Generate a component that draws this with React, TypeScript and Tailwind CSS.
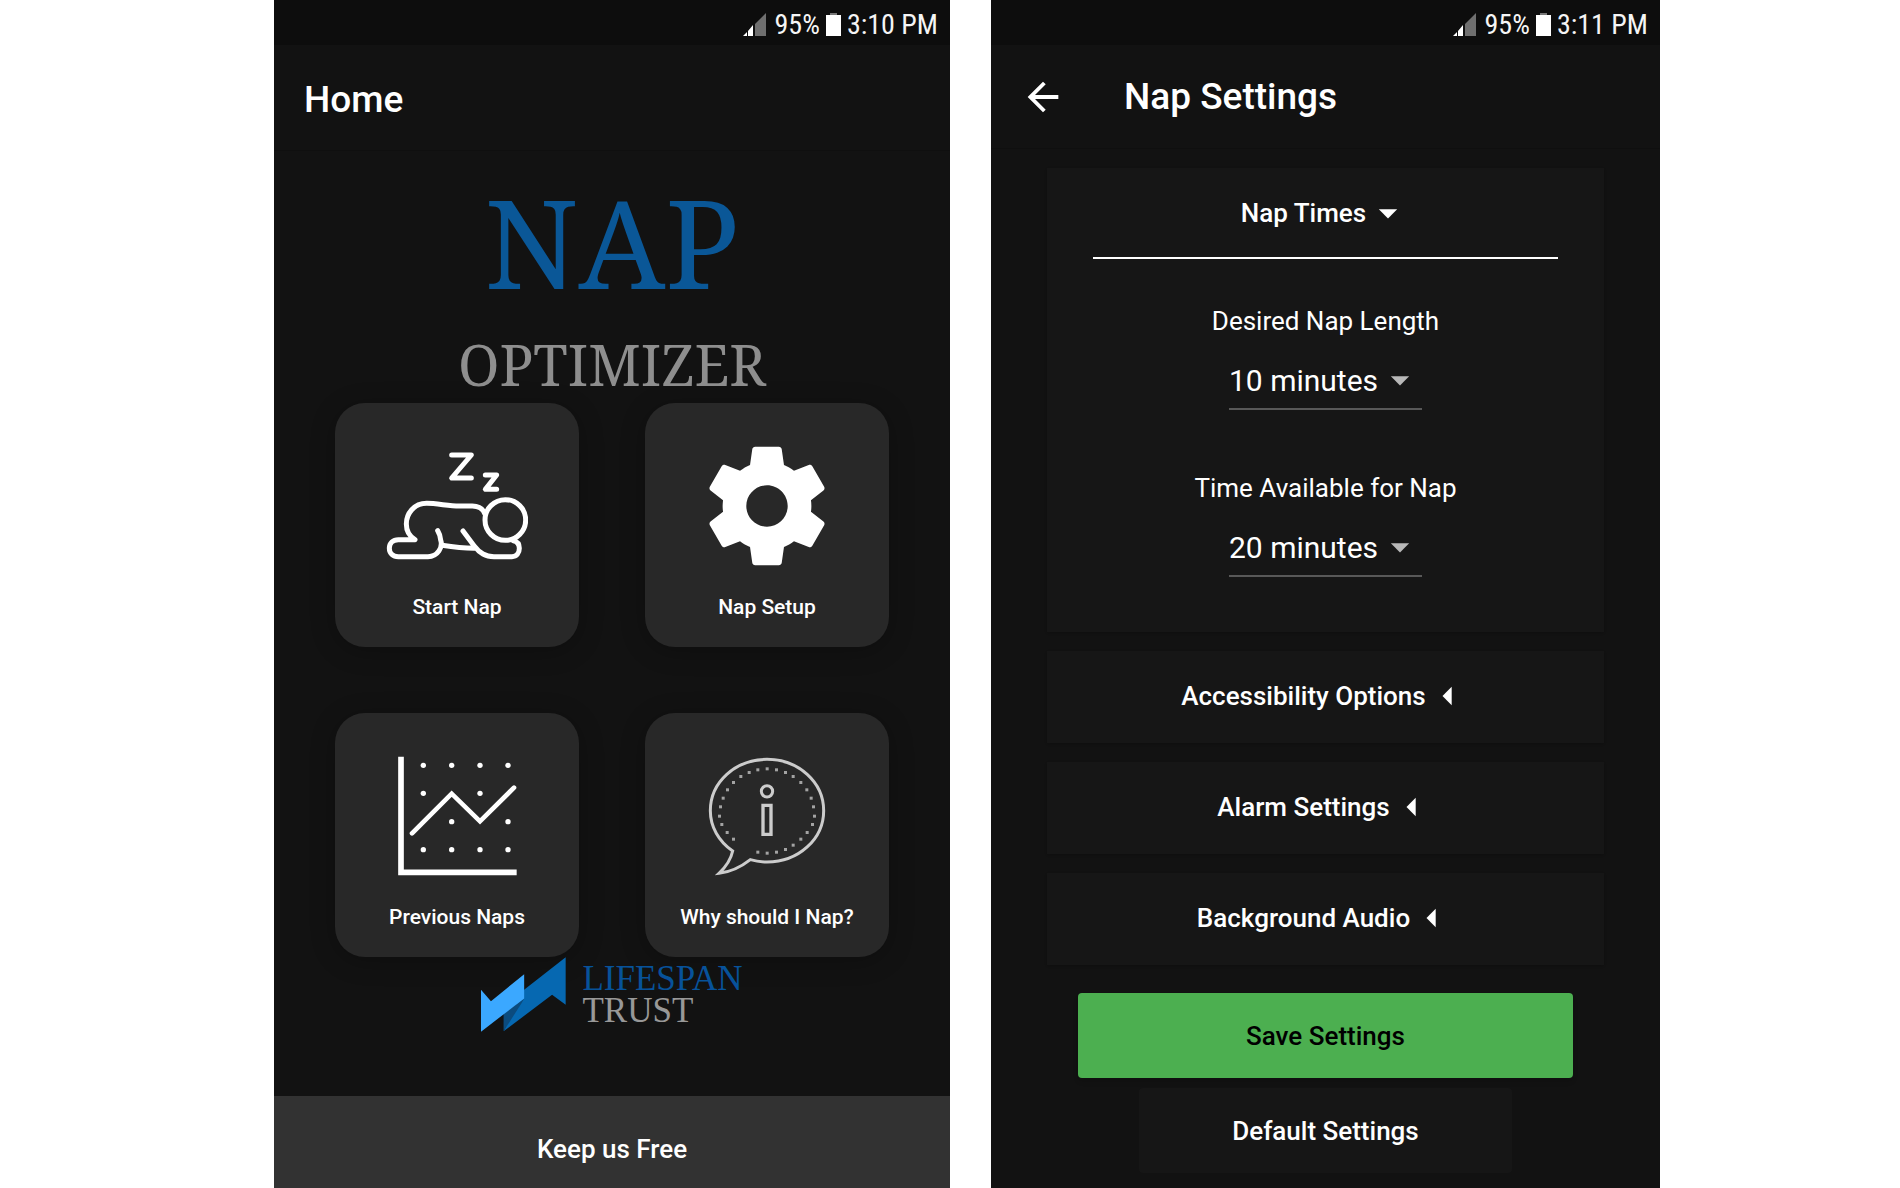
import React, { useId, useState } from "react";
import type { ReactNode } from "react";

function StatusBar({ time }: { time: string }) {
  return (
    <div className="flex h-[45px] items-center justify-end bg-[#0d0d0d] pr-3 pt-1 text-[28px] leading-8 text-[#f5f5f5] font-['Roboto_Condensed',Roboto,sans-serif]">
      <svg width="24" height="24" viewBox="0 0 24 24" aria-hidden="true">
        <path d="M0 23 4 19v4zM5 18l5-6v11H5z" fill="#fff" />
        <path d="M12 11 23 0v23H12z" fill="#6f6f6f" />
      </svg>
      <span className="ml-2">95%</span>
      <svg className="mx-[6px]" width="15" height="24" viewBox="0 0 15 24" aria-hidden="true">
        <path d="M4 0h7v3H4z" fill="#777" />
        <path d="M0 2h15v21H0z" fill="#fff" />
      </svg>
      <span>{time}</span>
    </div>
  );
}

const iconProps = {
  width: 142,
  height: 142,
  "aria-hidden": true,
  fill: "none",
} as const;

function SleeperIcon() {
  return (
    <svg {...iconProps} viewBox="198 134 426 426" stroke="#fff" strokeWidth="15" strokeLinecap="round" strokeLinejoin="round">
      <path d="M395 194h59l-59 69h59" />
      <path d="M496 254h34l-34 43h34" />
      <circle cx="556" cy="389" r="61" />
      <path d="M495 371c-6-16-19-24-38-24h-40c-30 0-67-8-97-8-38 0-61 31-61 62 0 20 8 36 26 47h-50c-16 0-27 11-27 26s11 25 27 25h89c30 0 45-29 38-50-1-12-4-20-9-28" />
      <path d="M366 465c31 5 63 9 96 9M429 422l33 44c18 23 34 33 60 33h54c14 0 22-11 22-25 0-13-7-21-18-23" />
    </svg>
  );
}

function GearIcon() {
  return (
    <svg {...iconProps} viewBox="0 0 24 24">
      <path
        fill="#fff"
        d="M19.43 12.98c.04-.32.07-.64.07-.98s-.03-.66-.07-.98l2.11-1.65c.19-.15.24-.42.12-.64l-2-3.46c-.12-.22-.39-.3-.61-.22l-2.49 1c-.52-.4-1.08-.73-1.69-.98l-.38-2.65C14.46 2.18 14.25 2 14 2h-4c-.25 0-.46.18-.49.42l-.38 2.65c-.61.25-1.17.59-1.69.98l-2.49-1c-.23-.09-.49 0-.61.22l-2 3.46c-.13.22-.07.49.12.64l2.11 1.65c-.04.32-.07.65-.07.98s.03.66.07.98l-2.11 1.65c-.19.15-.24.42-.12.64l2 3.46c.12.22.39.3.61.22l2.49-1c.52.4 1.08.73 1.69.98l.38 2.65c.03.24.24.42.49.42h4c.25 0 .46-.18.49-.42l.38-2.65c.61-.25 1.17-.59 1.69-.98l2.49 1c.23.09.49 0 .61-.22l2-3.46c.12-.22.07-.49-.12-.64l-2.11-1.65zM12 15.5c-1.93 0-3.5-1.57-3.5-3.5s1.57-3.5 3.5-3.5 3.5 1.57 3.5 3.5-1.57 3.5-3.5 3.5z"
      />
    </svg>
  );
}

const chartDots = [
  [310, 194], [395, 194], [480, 194], [564, 194],
  [310, 278], [480, 278],
  [395, 363], [564, 363],
  [310, 447], [395, 447], [480, 447], [564, 447],
];

function ChartIcon() {
  return (
    <svg {...iconProps} viewBox="198 133 426 426">
      <path d="M243 168v347h347" stroke="#fff" strokeWidth="17" />
      <path d="m276 398 119-119 85 83 102-101" stroke="#fff" strokeWidth="14" strokeLinecap="round" />
      {chartDots.map(([x, y]) => (
        <circle key={`${x}-${y}`} cx={x} cy={y} r="8" fill="#fff" />
      ))}
    </svg>
  );
}

const bubbleDots = [
  [411, 204], [439, 207], [466, 215], [489, 227], [512, 245], [530, 267], [543, 292], [550, 318], [553, 346],
  [547, 371], [531, 395], [512, 415], [489, 433], [466, 446], [439, 454], [411, 457], [383, 454],
  [383, 207], [357, 215], [332, 227], [310, 245], [292, 267], [279, 292], [271, 318], [268, 346],
  [275, 371], [291, 395], [310, 415],
];

function InfoBubbleIcon() {
  return (
    <svg {...iconProps} viewBox="198 133 426 426">
      <path
        d="M308 451c-42-29-67-73-67-121 0-85 75-154 170-154s170 69 170 154-75 154-170 154c-18 0-33-2-50-7-28 22-58 37-94 41 22-21 36-43 41-67z"
        stroke="#ccc"
        strokeWidth="9"
      />
      <circle cx="411" cy="272" r="17" stroke="#ccc" strokeWidth="9" />
      <path d="M399 314h24v87h-24z" stroke="#ccc" strokeWidth="10" />
      {bubbleDots.map(([x, y]) => (
        <rect key={`${x}-${y}`} x={x - 4} y={y - 4} width="9" height="9" fill="#a3a3a3" />
      ))}
    </svg>
  );
}

function Tile({ icon, label }: { icon: ReactNode; label: string }) {
  return (
    <button
      type="button"
      className="flex aspect-square flex-col items-center rounded-[30px] bg-[#282828] pt-8 shadow-[0_4px_24px_rgba(0,0,0,0.25)]"
    >
      {icon}
      <span className="mt-4 text-[21px] leading-7 font-medium whitespace-nowrap">{label}</span>
    </button>
  );
}

function HomeScreen() {
  return (
    <section className="flex min-h-screen flex-col bg-[#121212]">
      <StatusBar time="3:10 PM" />
      <header className="flex h-[106px] items-center border-b border-[#0f0f0f] px-[30px] pt-1">
        <h1 className="text-[37px] leading-[44px] font-medium">Home</h1>
      </header>
      <main className="flex flex-1 flex-col">
        <h2 className="flex flex-col items-center pt-[27px] font-['Noto_Serif','Liberation_Serif',serif]">
          <span className="text-[123px] leading-[128px] text-[#0a5797]">NAP</span>
          <span className="mt-[26px] mb-[7px] text-[56px] leading-[64px] text-[#8e8e8e]">OPTIMIZER</span>
        </h2>
        <div className="grid grid-cols-2 gap-x-[66px] gap-y-[66px] px-[61px]">
          <Tile icon={<SleeperIcon />} label="Start Nap" />
          <Tile icon={<GearIcon />} label="Nap Setup" />
          <Tile icon={<ChartIcon />} label="Previous Naps" />
          <Tile icon={<InfoBubbleIcon />} label="Why should I Nap?" />
        </div>
        <div className="flex justify-center gap-4">
          <svg width="85" height="75" viewBox="64 52 256 224" aria-hidden="true">
            <path d="M132 275 278 165l41 30V52L190 153z" fill="#0668b1" />
            <path d="m132 222 62-46-8 14-54 85z" fill="#0b4b7e" />
            <path d="m64 150 30 34 100-81v73L64 276z" fill="#3ba8ff" />
          </svg>
          <div className="pt-[6px] text-[35px] leading-8 font-['Liberation_Serif',serif]">
            <div className="text-[#07529a]">LIFESPAN</div>
            <div className="text-[#989898]">TRUST</div>
          </div>
        </div>
      </main>
      <button type="button" className="h-[92px] bg-[#323232] pt-[14px] text-[26px] leading-8 font-medium">
        Keep us Free
      </button>
    </section>
  );
}

function Triangle({ direction, color }: { direction: "down" | "left"; color: string }) {
  return (
    <svg width="44" height="44" viewBox="0 0 24 24" fill={color} aria-hidden="true">
      <path d={direction === "down" ? "m7 10 5 5 5-5z" : "m14 7-5 5 5 5z"} />
    </svg>
  );
}

function MinutesField({ label, initial }: { label: string; initial: string }) {
  const id = useId();
  const [value, setValue] = useState(initial);
  return (
    <div className="flex flex-col items-center">
      <label htmlFor={id} className="text-[26px] leading-8">
        {label}
      </label>
      <div className="relative mt-[17px]">
        <select
          id={id}
          value={value}
          onChange={(e) => setValue(e.target.value)}
          className="h-14 w-[193px] appearance-none border-b-2 border-[#585858] bg-transparent pb-0 text-[30px] leading-[52px] outline-none"
        >
          <option>10 minutes</option>
          <option>20 minutes</option>
          <option>30 minutes</option>
        </select>
        <span className="pointer-events-none absolute top-1 right-0">
          <Triangle direction="down" color="#b8b8b8" />
        </span>
      </div>
    </div>
  );
}

function CollapsedPanel({ title }: { title: string }) {
  return (
    <button
      type="button"
      aria-expanded="false"
      className="flex h-[92px] items-center justify-center bg-[#161616] pb-0.5 text-[26px] leading-8 font-medium shadow-sm"
    >
      {title}
      <Triangle direction="left" color="#fff" />
    </button>
  );
}

function SettingsScreen() {
  return (
    <section className="flex min-h-screen flex-col bg-[#121212]">
      <StatusBar time="3:11 PM" />
      <header className="flex h-[104px] items-center border-b border-[#0f0f0f] px-[29px]">
        <button type="button" aria-label="Back">
          <svg width="46" height="46" viewBox="0 0 24 24" fill="#fff" aria-hidden="true">
            <path d="M20 11H7.83l5.59-5.59L12 4l-8 8 8 8 1.41-1.41L7.83 13H20v-2z" />
          </svg>
        </button>
        <h1 className="ml-[58px] text-[37px] leading-[44px] font-medium">Nap Settings</h1>
      </header>
      <main className="flex flex-1 flex-col px-14 pt-[19px]">
        <div className="flex flex-col gap-[19px]">
          <div className="bg-[#161616] px-[46px] pb-[55px] shadow-sm">
            <button
              type="button"
              aria-expanded="true"
              className="flex h-[91px] w-full items-center justify-center border-b-2 border-white text-[26px] leading-8 font-medium"
            >
              Nap Times
              <Triangle direction="down" color="#fff" />
            </button>
            <div className="flex flex-col gap-[62px] pt-[46px]">
              <MinutesField label="Desired Nap Length" initial="10 minutes" />
              <MinutesField label="Time Available for Nap" initial="20 minutes" />
            </div>
          </div>
          <CollapsedPanel title="Accessibility Options" />
          <CollapsedPanel title="Alarm Settings" />
          <CollapsedPanel title="Background Audio" />
        </div>
        <div className="flex flex-col gap-[10px] px-[31px] pt-7">
          <button type="button" className="h-[85px] rounded bg-[#4caf50] text-[26px] leading-8 font-medium text-black shadow-md">
            Save Settings
          </button>
          <button type="button" className="mx-[61px] h-[85px] rounded bg-[#161616] text-[26px] leading-8 font-medium">
            Default Settings
          </button>
        </div>
      </main>
    </section>
  );
}

export default function App() {
  return (
    <div className="grid min-h-screen grid-cols-[676fr_669fr] gap-[41px] bg-white pr-60 pl-[274px] text-white font-['Roboto',sans-serif]">
      <HomeScreen />
      <SettingsScreen />
    </div>
  );
}
